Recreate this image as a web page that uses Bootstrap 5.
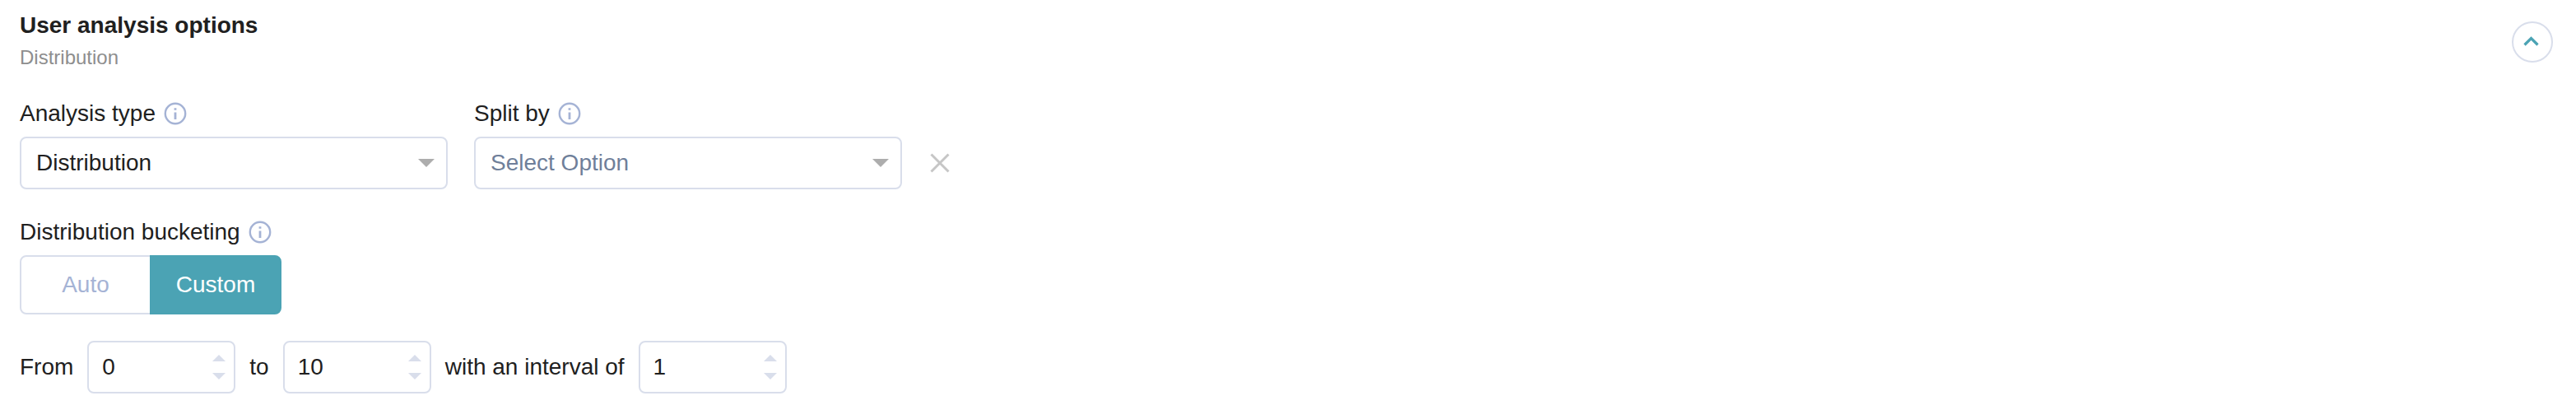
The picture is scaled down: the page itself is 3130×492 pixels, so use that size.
<!DOCTYPE html>
<html lang="en">
<head>
<meta charset="utf-8">
<meta name="viewport" content="width=device-width, initial-scale=1">
<title>User analysis options</title>
<link href="https://cdn.jsdelivr.net/npm/bootstrap@5.3.0/dist/css/bootstrap.min.css" rel="stylesheet">
<style>
  :root { --line: #d9deeb; --info: #a5b3d5; --teal: #4ba3b4; --ink: #202020; }
  body { font-family: "Liberation Sans", Arial, sans-serif; font-size: 28px; line-height: 40px; color: var(--ink); background: #fff; }
  .panel { padding: 11px 28px 12px 24px; }
  .panel-title { font-size: 28px; line-height: 40px; font-weight: 700; }
  .panel-sub { font-size: 24px; line-height: 38px; color: #8e8e8e; }
  .collapse-btn { width: 50px; height: 50px; border: 2px solid var(--line); margin-top: 15px; }
  .section-stack { gap: 32px; margin-top: 29px; }
  .picker-row { gap: 32px; }
  .field-head { gap: 10px; margin-bottom: 8px; }
  .info-btn { width: 28px; height: 28px; }
  .picker { width: 520px; }
  .form-select, .form-control { height: 64px; border: 2px solid var(--line); border-radius: 8px; font-size: 28px; line-height: 40px; color: var(--ink); }
  .form-select { padding: 0 48px 0 18px; background-size: 20px 10px; background-position: right 14px center;
    background-image: url("data:image/svg+xml,%3Csvg xmlns='http://www.w3.org/2000/svg' viewBox='0 0 20 10'%3E%3Cpath fill='%23adadad' d='M0 0h20L10 10z'/%3E%3C/svg%3E"); }
  .form-select.is-empty { color: #6f7f9a; }
  .clear-btn { width: 28px; height: 64px; }
  .seg .btn { height: 72px; width: 160px; border: 2px solid var(--line); border-radius: 8px; font-size: 28px; line-height: 40px; color: var(--info); }
  .seg.btn-group > .btn:not(:first-child) { margin-left: -2px; }
  .seg .btn.active { background: var(--teal); border-color: var(--teal); color: #fff; }
  .range-row { column-gap: 17px; row-gap: 12px; }
  .stepper { width: 180px; }
  .stepper .form-control { padding: 0 44px 0 16px; appearance: textfield; -moz-appearance: textfield; }
  .stepper .form-control::-webkit-inner-spin-button { appearance: none; -webkit-appearance: none; margin: 0; }
  .step-arrows { right: 12px; gap: 14px; }
  .step-arrows svg { width: 16px; height: 8px; fill: var(--line); }
</style>
</head>
<body>
<main class="panel">
  <header class="d-flex justify-content-between align-items-start">
    <div>
      <h1 class="panel-title m-0">User analysis options</h1>
      <p class="panel-sub m-0">Distribution</p>
    </div>
    <button type="button" class="collapse-btn btn bg-white rounded-circle p-0 d-flex align-items-center justify-content-center" aria-label="Collapse">
      <svg width="22" height="18" viewBox="0 0 22 18" fill="none" stroke="#4ba3b4" stroke-width="3.200"><path d="M1.500 12.500 9.500 4.500l8 8"/></svg>
    </button>
  </header>

  <form class="section-stack d-flex flex-column">
    <div class="picker-row d-flex flex-wrap align-items-end">
      <div class="picker">
        <div class="field-head d-flex align-items-center">
          <label for="type">Analysis type</label>
          <button type="button" class="info-btn btn border-0 p-0 d-flex" aria-label="About analysis type"><svg width="28" height="28" viewBox="0 0 28 28"><circle cx="14" cy="14" r="12.200" fill="none" stroke="#a5b3d5" stroke-width="2.400"/><path fill="#a5b3d5" d="M12.600 7.200h2.800v2.600h-2.800zM12.600 12.600h2.800v8.400h-2.800z"/></svg></button>
        </div>
        <select id="type" class="form-select"><option>Distribution</option></select>
      </div>
      <div class="picker">
        <div class="field-head d-flex align-items-center">
          <label for="split">Split by</label>
          <button type="button" class="info-btn btn border-0 p-0 d-flex" aria-label="About split by"><svg width="28" height="28" viewBox="0 0 28 28"><circle cx="14" cy="14" r="12.200" fill="none" stroke="#a5b3d5" stroke-width="2.400"/><path fill="#a5b3d5" d="M12.600 7.200h2.800v2.600h-2.800zM12.600 12.600h2.800v8.400h-2.800z"/></svg></button>
        </div>
        <select id="split" class="form-select is-empty"><option>Select Option</option></select>
      </div>
      <button type="button" class="clear-btn btn border-0 p-0 d-flex align-items-center justify-content-center" aria-label="Remove split">
        <svg width="24" height="24" viewBox="0 0 24 24" fill="none" stroke="#c6c6c6" stroke-width="3"><path d="m1.500 1.500 21 21m0-21-21 21"/></svg>
      </button>
    </div>

    <div>
      <div class="field-head d-flex align-items-center">
        <span id="bucketing">Distribution bucketing</span>
        <button type="button" class="info-btn btn border-0 p-0 d-flex" aria-label="About distribution bucketing"><svg width="28" height="28" viewBox="0 0 28 28"><circle cx="14" cy="14" r="12.200" fill="none" stroke="#a5b3d5" stroke-width="2.400"/><path fill="#a5b3d5" d="M12.600 7.200h2.800v2.600h-2.800zM12.600 12.600h2.800v8.400h-2.800z"/></svg></button>
      </div>
      <div class="seg btn-group d-flex" role="group" aria-labelledby="bucketing">
        <button type="button" class="btn p-0 flex-grow-0" aria-pressed="false">Auto</button>
        <button type="button" class="btn p-0 flex-grow-0 active" aria-pressed="true">Custom</button>
      </div>
    </div>

    <div class="range-row d-flex flex-wrap align-items-center">
      <label for="from">From</label>
      <div class="stepper position-relative">
        <input id="from" type="number" class="form-control" value="0">
        <div class="step-arrows position-absolute top-50 translate-middle-y d-flex flex-column pe-none" aria-hidden="true">
          <svg viewBox="0 0 16 8"><path d="M0 8h16L8 0z"/></svg><svg viewBox="0 0 16 8"><path d="M0 0h16L8 8z"/></svg>
        </div>
      </div>
      <label for="to">to</label>
      <div class="stepper position-relative">
        <input id="to" type="number" class="form-control" value="10">
        <div class="step-arrows position-absolute top-50 translate-middle-y d-flex flex-column pe-none" aria-hidden="true">
          <svg viewBox="0 0 16 8"><path d="M0 8h16L8 0z"/></svg><svg viewBox="0 0 16 8"><path d="M0 0h16L8 8z"/></svg>
        </div>
      </div>
      <label for="interval">with an interval of</label>
      <div class="stepper position-relative">
        <input id="interval" type="number" class="form-control" value="1">
        <div class="step-arrows position-absolute top-50 translate-middle-y d-flex flex-column pe-none" aria-hidden="true">
          <svg viewBox="0 0 16 8"><path d="M0 8h16L8 0z"/></svg><svg viewBox="0 0 16 8"><path d="M0 0h16L8 8z"/></svg>
        </div>
      </div>
    </div>
  </form>
</main>
<script src="https://cdn.jsdelivr.net/npm/bootstrap@5.3.0/dist/js/bootstrap.bundle.min.js"></script>
</body>
</html>
